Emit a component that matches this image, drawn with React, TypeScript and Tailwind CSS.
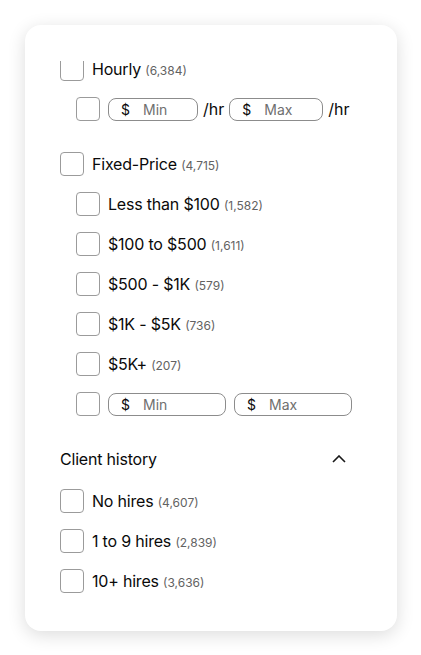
import React from "react";

const font = { fontFamily: "Inter, 'Noto Sans', sans-serif" };

function Box() {
  return <span className="block w-6 h-6 shrink-0 rounded-[4px] border border-[#9b9b9b] bg-white" />;
}

// top checkbox is partly scrolled out of view in the panel
function CutBox() {
  return (
    <span className="flex flex-col justify-end w-6 h-6 shrink-0">
      <span className="flex flex-col justify-end h-[20px] overflow-hidden">
        <Box />
      </span>
    </span>
  );
}

function Option({ label, count, nested, cut }: { label: string; count: string; nested?: boolean; cut?: boolean }) {
  return (
    <div className={`flex items-center gap-2 h-6 ${nested ? "pl-4" : ""}`}>
      {cut ? <CutBox /> : <Box />}
      <span className="text-[16px] text-[#0a0a0a] tracking-[-0.2px]">
        {label} <span className="text-[12px] text-[#626262] tracking-normal">{count}</span>
      </span>
    </div>
  );
}

function Money({ placeholder, w }: { placeholder: string; w: string }) {
  return (
    <div className={`flex items-center h-[23px] rounded-lg border border-[#8c8c8c] bg-white pl-3 ${w}`}>
      <span className="text-[14px] text-[#0a0a0a]">$</span>
      <span className="ml-[13px] text-[14px] text-[#6f6f6f]">{placeholder}</span>
    </div>
  );
}

export default function App() {
  return (
    <div className="min-h-screen bg-white pl-[25px] pt-[25px]" style={font}>
      <div className="w-[372px] h-[606px] rounded-2xl bg-white shadow-[0_4px_18px_rgba(0,0,0,0.14)] px-[35px] pt-[32px]">
        <div className="flex flex-col">
          <Option label="Hourly" count="(6,384)" cut />
          <div className="mt-4 flex items-center pl-4">
            <Box />
            <div className="ml-2 flex items-center gap-[5px] text-[16px] text-[#0a0a0a]">
              <Money placeholder="Min" w="w-[90px]" />
              <span>/hr</span>
              <Money placeholder="Max" w="w-[94px]" />
              <span>/hr</span>
            </div>
          </div>

          <div className="mt-[31px] flex flex-col gap-4">
            <Option label="Fixed-Price" count="(4,715)" />
            <Option label="Less than $100" count="(1,582)" nested />
            <Option label="$100 to $500" count="(1,611)" nested />
            <Option label="$500 - $1K" count="(579)" nested />
            <Option label="$1K - $5K" count="(736)" nested />
            <Option label="$5K+" count="(207)" nested />
            <div className="flex items-center gap-2 pl-4">
              <Box />
              <Money placeholder="Min" w="w-[118px]" />
              <Money placeholder="Max" w="w-[118px]" />
            </div>
          </div>

          <div className="mt-[31px] flex items-center justify-between h-6 pr-[16px]">
            <span className="text-[16px] text-[#0a0a0a] tracking-[-0.2px]">Client history</span>
            <svg width="14" height="8" viewBox="0 0 14 8" fill="none">
              <path d="M1 7 L7 1 L13 7" stroke="#181818" strokeWidth="1.6" />
            </svg>
          </div>

          <div className="mt-[18px] flex flex-col gap-4">
            <Option label="No hires" count="(4,607)" />
            <Option label="1 to 9 hires" count="(2,839)" />
            <Option label="10+ hires" count="(3,636)" />
          </div>
        </div>
      </div>
    </div>
  );
}
